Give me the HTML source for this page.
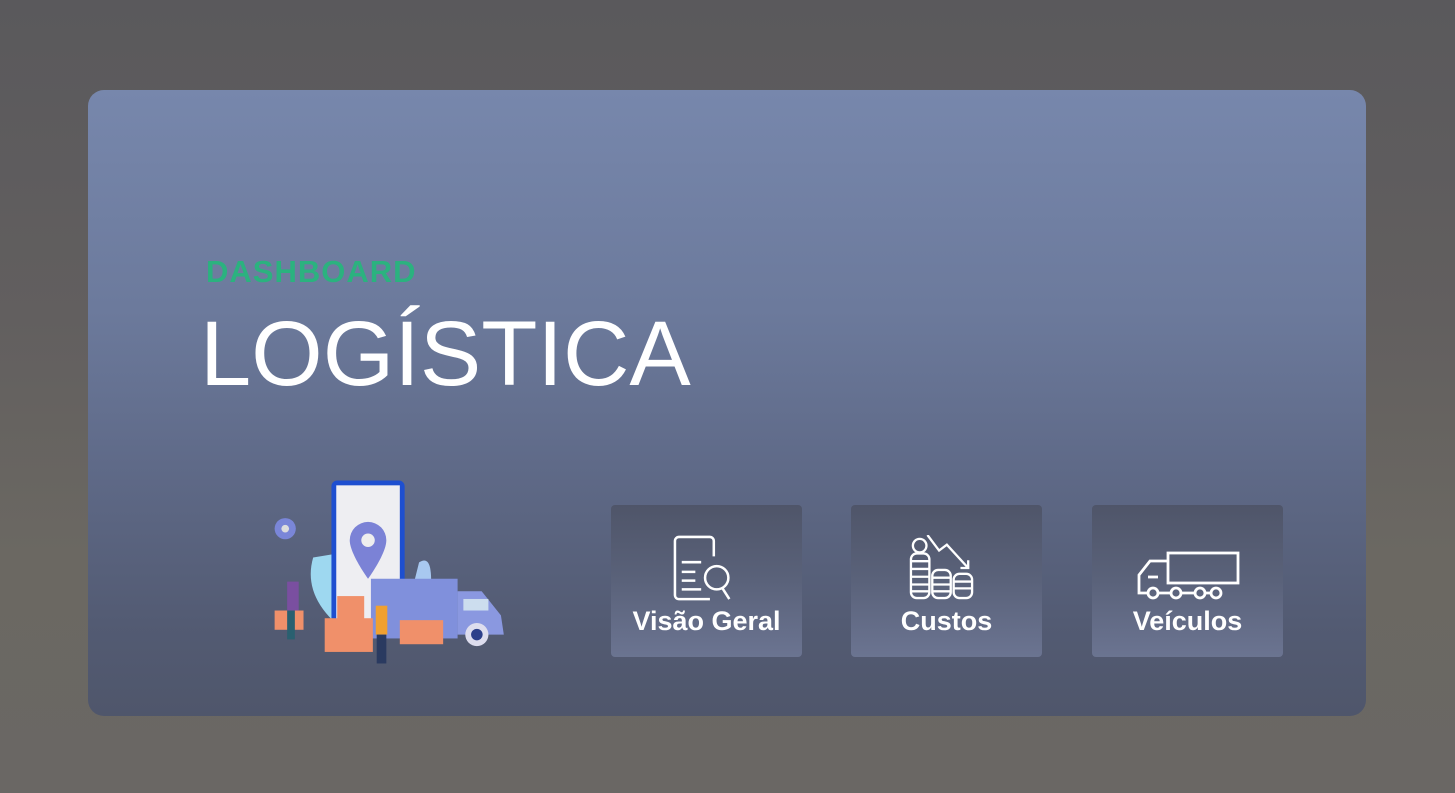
<!DOCTYPE html>
<html><head><meta charset="utf-8"><style>
*{margin:0;padding:0;box-sizing:border-box}
body{width:1455px;height:793px;overflow:hidden;background:linear-gradient(180deg,#5a595c 0%,#625f5f 40%,#6b6862 70%,#6a6764 100%);font-family:"Liberation Sans",sans-serif;position:relative}
.card{position:absolute;left:88px;top:90px;width:1278px;height:626px;border-radius:16px;background:linear-gradient(180deg,#7787ac 0%,#6c7a9c 35%,#5f6a88 60%,#535b73 85%,#4f566b 100%)}
.d{position:absolute;left:206px;top:254px;color:#2bb27f;font-weight:bold;font-size:31px;letter-spacing:1px}
.l{position:absolute;left:200px;top:302px;color:#fff;font-size:92px;font-weight:normal;letter-spacing:0px}
.b{position:absolute;top:505px;width:191px;height:152px;border-radius:4px;background:linear-gradient(180deg,#4f5569 0%,#5a627a 50%,#6b7491 100%);color:#fff;font-weight:bold;font-size:27px;text-align:center}
.b span{position:absolute;left:0;right:0;top:101px}
.b svg{position:absolute}
</style></head><body>
<div class="card"></div>
<div class="d">DASHBOARD</div>
<div class="l">LOGÍSTICA</div>
<svg style="position:absolute;left:265px;top:472px" width="260" height="200" viewBox="0 0 270 200">
<circle cx="21" cy="55" r="11" fill="#7a86d8"/><circle cx="21" cy="55" r="4" fill="#ddd"/>
<path d="M50 85 Q40 120 70 150 L90 150 L80 80Z" fill="#9ed8f0"/>
<path d="M160 90 Q175 80 172 120 L150 130Z" fill="#a8c8f0"/>
<rect x="69" y="5" width="76" height="160" rx="6" fill="#1e4fd0"/>
<rect x="74" y="10" width="66" height="150" fill="#eeeef2"/>
<path d="M107 48 a19 19 0 0 1 19 19 c0 14 -19 40 -19 40 c0 0 -19 -26 -19 -40 a19 19 0 0 1 19 -19z" fill="#7b82d6"/>
<circle cx="107" cy="67" r="7" fill="#eee"/>
<rect x="110" y="107" width="90" height="62" fill="#8090dc"/>
<path d="M200 120 L225 120 L245 145 L248 165 L200 165Z" fill="#8a98e0"/>
<rect x="206" y="128" width="26" height="12" fill="#cde"/>
<circle cx="220" cy="165" r="12" fill="#dde"/><circle cx="220" cy="165" r="6" fill="#2c3f8a"/>
<rect x="62" y="148" width="50" height="35" fill="#f0906a"/><rect x="75" y="125" width="28" height="28" fill="#f0906a"/>
<rect x="140" y="150" width="45" height="25" fill="#f0906a"/>
<rect x="10" y="140" width="30" height="20" fill="#f0906a"/>
<rect x="23" y="110" width="12" height="30" fill="#7a4fa0"/><rect x="23" y="140" width="8" height="30" fill="#2a6070"/>
<rect x="115" y="135" width="12" height="30" fill="#f0a030"/><rect x="116" y="165" width="10" height="30" fill="#2a3a60"/>
</svg>
<div class="b" style="left:611px"><svg style="left:62px;top:30px" width="68" height="68" viewBox="0 0 70 70" fill="none" stroke="#fff" stroke-width="2.6"><path d="M42 22V6a4 4 0 0 0-4-4H6a4 4 0 0 0-4 4v56a4 4 0 0 0 4 4h32"/><path d="M9 28h20M9 38h14M9 47h14M9 56h20"/><circle cx="45" cy="44" r="12"/><path d="M51 55l7 11"/></svg><span>Visão Geral</span></div>
<div class="b" style="left:851px"><svg style="left:57px;top:30px" width="68" height="66" viewBox="0 0 70 68" fill="none" stroke="#fff" stroke-width="2.4"><circle cx="12" cy="11" r="7"/><rect x="3" y="19" width="19" height="46" rx="6"/><path d="M3 27h19M3 35h19M3 43h19M3 51h19M3 58h19"/><rect x="25" y="36" width="19" height="29" rx="6"/><path d="M25 44h19M25 51h19M25 58h19"/><rect x="47" y="40" width="19" height="25" rx="6"/><path d="M47 48h19M47 55h19"/><path d="M20 0l12 16 8-6 22 24M62 26v8h-8"/></svg><span>Custos</span></div>
<div class="b" style="left:1092px"><svg style="left:44px;top:46px" width="104" height="50" viewBox="0 0 104 50" fill="none" stroke="#fff" stroke-width="2.8"><rect x="32" y="2" width="70" height="30"/><path d="M32 10H14L3 24v18h9M22 42h12M46 42h12M70 42h4"/><circle cx="17" cy="42" r="5"/><circle cx="40" cy="42" r="5"/><circle cx="64" cy="42" r="5"/><circle cx="80" cy="42" r="5"/><path d="M12 26h10"/></svg><span>Veículos</span></div>
</body></html>
